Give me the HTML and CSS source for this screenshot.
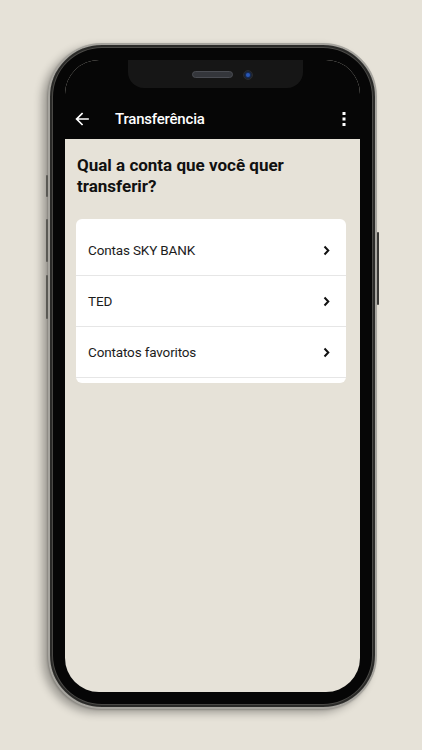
FILE: index.html
```html
<!DOCTYPE html>
<html lang="pt-BR">
<head>
<meta charset="utf-8">
<title>Transferência</title>
<link rel="stylesheet" href="styles.css">
</head>
<body>
<div class="stage">
  <div class="phone">
    <span class="btn btn-silent"></span>
    <span class="btn btn-vol-up"></span>
    <span class="btn btn-vol-down"></span>
    <span class="btn btn-power"></span>
    <div class="screen">
      <div class="notch">
        <span class="speaker"></span>
        <span class="camera"></span>
      </div>
      <header class="appbar">
        <div class="appbar-row">
          <svg class="back" width="14" height="14" viewBox="0 0 14 14" aria-hidden="true">
            <path d="M13 7H1.8M7 1.6L1.6 7 7 12.4" fill="none" stroke="#fff" stroke-width="1.7" stroke-linecap="square"/>
          </svg>
          <h1 class="title">Transferência</h1>
          <svg class="more" width="4" height="14" viewBox="0 0 4 14" aria-hidden="true">
            <rect x="0.5" y="0" width="3" height="3" fill="#fff"/>
            <rect x="0.5" y="5.5" width="3" height="3" fill="#fff"/>
            <rect x="0.5" y="11" width="3" height="3" fill="#fff"/>
          </svg>
        </div>
      </header>
      <main class="content">
        <h2 class="question">Qual a conta que você quer transferir?</h2>
        <ul class="card">
          <li class="row"><span>Contas SKY BANK</span><svg class="chev" width="7" height="11" viewBox="0 0 7 11"><path d="M1.5 1.5L5.3 5.5 1.5 9.5" fill="none" stroke="#111" stroke-width="2"/></svg></li>
          <li class="row"><span>TED</span><svg class="chev" width="7" height="11" viewBox="0 0 7 11"><path d="M1.5 1.5L5.3 5.5 1.5 9.5" fill="none" stroke="#111" stroke-width="2"/></svg></li>
          <li class="row"><span>Contatos favoritos</span><svg class="chev" width="7" height="11" viewBox="0 0 7 11"><path d="M1.5 1.5L5.3 5.5 1.5 9.5" fill="none" stroke="#111" stroke-width="2"/></svg></li>
        </ul>
      </main>
    </div>
  </div>
</div>
</body>
</html>
```

FILE: styles.css
```css
* { box-sizing: border-box; }
html, body { margin: 0; padding: 0; }
body {
  background: #e6e2d8;
  width: 422px;
  height: 750px;
  overflow: hidden;
  font-family: Roboto, "Noto Sans", sans-serif;
}
.stage {
  padding: 43px 0 0 48px;
}
.phone {
  position: relative;
  width: 329px;
  height: 666px;
  border-radius: 54px;
  background: #060606;
  border: 2px solid #a6a49e;
  box-shadow: inset 0 0 0 2px #2a2a28, inset 0 0 0 3px #4a4946, -6px 4px 9px rgba(0,0,0,0.3), -1px 1px 2px rgba(0,0,0,0.2);
  padding: 15px;
}
.btn {
  position: absolute;
  width: 2px;
  background: #5a5954;
  border-radius: 1px;
}
.btn-silent { left: -4px; top: 130px; height: 22px; }
.btn-vol-up { left: -4px; top: 174px; height: 43px; }
.btn-vol-down { left: -4px; top: 230px; height: 44px; }
.btn-power { right: -4px; top: 187px; height: 73px; background: #3a3936; }
.screen {
  position: relative;
  width: 100%;
  height: 100%;
  border-radius: 34px;
  overflow: hidden;
  background: #e6e2d8;
  display: flex;
  flex-direction: column;
}
.notch {
  position: absolute;
  left: 63px;
  top: 0;
  width: 175px;
  height: 28px;
  background: #161616;
  border-radius: 0 0 16px 16px;
  display: flex;
  align-items: center;
  justify-content: center;
  gap: 10px;
  padding: 1px 0 0 14px;
}
.speaker {
  width: 41px;
  height: 7px;
  border-radius: 4px;
  background: #34363b;
  border: 1px solid #4a4c52;
}
.camera {
  width: 10px;
  height: 10px;
  border-radius: 50%;
  background: radial-gradient(circle at 50% 50%, #2a58b8 0 25%, #142a55 45%, #1d2129 70%);
  border: 1px solid #2a2c30;
}
.appbar {
  background: #060606;
  height: 79px;
  padding-top: 39px;
  flex: none;
}
.appbar-row {
  height: 40px;
  display: flex;
  align-items: center;
  padding: 0 14px 0 10px;
}
.back { flex: none; }
.title {
  margin: 0 0 0 26px;
  flex: 1;
  color: #fff;
  font-size: 15px;
  font-weight: 500;
  letter-spacing: -0.2px;
}
.more { flex: none; }
.content {
  padding: 16px 14px 0 11px;
}
.question {
  margin: 0 0 22px 1px;
  font-size: 17px;
  line-height: 21px;
  font-weight: 700;
  color: #111;
}
.card {
  list-style: none;
  margin: 0;
  padding: 6px 0 5px;
  background: #fff;
  border-radius: 6px;
}
.row {
  height: 51px;
  display: flex;
  align-items: center;
  justify-content: space-between;
  padding: 0 16px 0 12px;
  border-bottom: 1px solid #e6e6e6;
  font-size: 13.5px;
  letter-spacing: -0.15px;
  color: #1c1c1c;
}
.chev { flex: none; }
```
